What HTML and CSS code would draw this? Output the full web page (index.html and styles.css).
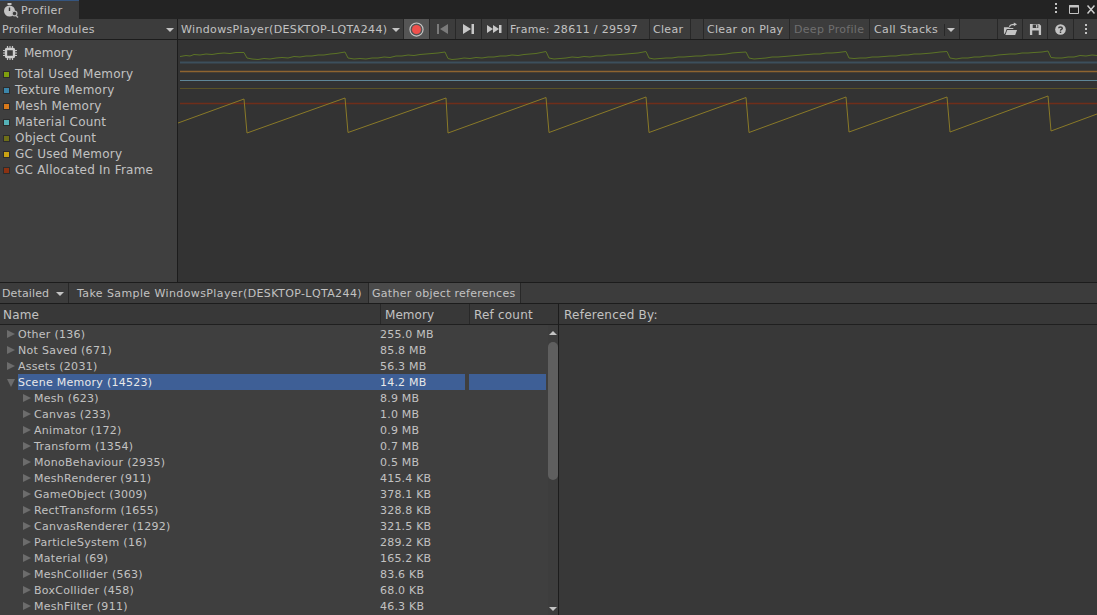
FILE: index.html
```html
<!DOCTYPE html>
<html lang="en">
<head>
<meta charset="utf-8">
<title>Profiler</title>
<link rel="stylesheet" href="styles.css">
</head>
<body>
<div class="window">
  <header class="titlebar">
    <div class="tab">
      <svg class="tab-icon" width="16" height="15" viewBox="0 0 16 15"><circle cx="6.500" cy="8" r="5.500" fill="#c4c4c4"/><rect x="4.500" y="0" width="4" height="2" fill="#c4c4c4"/><path d="M6.500 8V4.500" stroke="#333" stroke-width="1.400"/><circle cx="11.500" cy="10.500" r="2.400" fill="#3a3a3a" stroke="#b5b5b5" stroke-width="1.200"/><path d="M13 12.500l2 2" stroke="#b5b5b5" stroke-width="1.400"/></svg>
      <span>Profiler</span>
    </div>
    <div class="win-controls">
      <svg class="wc-dots" width="4" height="12" viewBox="0 0 4 12"><rect x="1" y="0" width="2" height="2" fill="#c4c4c4"/><rect x="1" y="4" width="2" height="2" fill="#c4c4c4"/><rect x="1" y="8" width="2" height="2" fill="#c4c4c4"/></svg>
      <svg class="wc-max" width="10" height="9" viewBox="0 0 10 9"><path d="M.5.500h9v8h-9z" fill="none" stroke="#c4c4c4"/><path d="M0 1.500h10" stroke="#c4c4c4" stroke-width="2"/></svg>
      <svg width="8" height="9" viewBox="0 0 8 9"><path d="M.5.500l7 8M7.500.500l-7 8" stroke="#d0d0d0" stroke-width="1.500"/></svg>
    </div>
  </header>

  <nav class="toolbar">
    <div class="tb modules"><span>Profiler Modules</span><i class="caret"></i></div>
    <div class="tb target"><span>WindowsPlayer(DESKTOP-LQTA244)</span><i class="caret"></i></div>
    <div class="tb icon-btn record"><svg width="15" height="15" viewBox="0 0 16 16"><circle cx="8" cy="8" r="7" fill="none" stroke="#c9c9c9" stroke-width="1.200"/><circle cx="8" cy="8" r="4.800" fill="#f0504c"/></svg></div>
    <div class="tb icon-btn"><svg width="11" height="12" viewBox="0 0 11 12"><path d="M0 1h2v10H0zM11 1v10L3 6z" fill="#7b7b7b"/></svg></div>
    <div class="tb icon-btn"><svg width="11" height="12" viewBox="0 0 11 12"><path d="M0 1v10l8-5zM8.500 1h2.500v10H8.500z" fill="#c8c8c8"/></svg></div>
    <div class="tb icon-btn"><svg width="15" height="10" viewBox="0 0 15 10"><path d="M0 1v8l6-4zM6 1v8l6-4zM12 1h2.500v8H12z" fill="#c8c8c8"/></svg></div>
    <div class="tb frame">Frame: 28611 / 29597</div>
    <div class="tb clear">Clear</div>
    <div class="tb spacer-s"></div>
    <div class="tb clear-play">Clear on Play</div>
    <div class="tb deep">Deep Profile</div>
    <div class="tb stacks"><span>Call Stacks</span><b class="sep"></b><i class="caret"></i></div>
    <div class="tb spacer-m"></div>
    <div class="tb icon-btn open"><svg width="15" height="14" viewBox="0 0 16 14"><path d="M1 5h5l1 1h4v1H4L2 12H1zM4.500 8H15l-2 5.500H2.500z" fill="#c4c4c4"/><path d="M7 5c0-2 2-3 5-3" fill="none" stroke="#c4c4c4" stroke-width="1.200"/><path d="M11.500 0l3.500 2-3.500 2z" fill="#c4c4c4"/></svg></div>
    <div class="tb icon-btn save"><svg width="13" height="13" viewBox="0 0 14 14"><path fill-rule="evenodd" d="M1 1h10l2 2v10H1zM4 1.500v4h6v-4zM3.500 8v5h7V8z" fill="#c4c4c4"/><path d="M7.500 2h1.500v3H7.500z" fill="#c4c4c4"/></svg></div>
    <div class="tb icon-btn help"><svg width="11" height="11" viewBox="0 0 12 12"><circle cx="6" cy="6" r="5.800" fill="#c4c4c4"/><path d="M4 4.700C4 2.800 8 2.800 8 4.700 8 6 6 5.800 6 7.300" fill="none" stroke="#3c3c3c" stroke-width="1.500"/><rect x="5.200" y="8.200" width="1.600" height="1.600" fill="#3c3c3c"/></svg></div>
    <div class="tb icon-btn menu"><svg width="4" height="12" viewBox="0 0 4 12"><rect x="1" y="1" width="2" height="2" fill="#c4c4c4"/><rect x="1" y="5" width="2" height="2" fill="#c4c4c4"/><rect x="1" y="9" width="2" height="2" fill="#c4c4c4"/></svg></div>
  </nav>

  <section class="chart-area">
    <aside class="legend">
      <div class="legend-title">
        <svg width="14" height="14" viewBox="0 0 14 14"><rect x="3" y="3" width="8" height="8" rx="1" fill="none" stroke="#cfcfcf" stroke-width="2.400"/><path d="M4.500 0v2M7 0v2M9.500 0v2M4.500 12v2M7 12v2M9.500 12v2M0 4.500h2M0 7h2M0 9.500h2M12 4.500h2M12 7h2M12 9.500h2" stroke="#c4c4c4" stroke-width="1.200"/></svg>
        <span>Memory</span>
      </div>
      <div class="legend-item"><i class="sw sw-total"></i>Total Used Memory</div>
      <div class="legend-item"><i class="sw sw-tex"></i>Texture Memory</div>
      <div class="legend-item"><i class="sw sw-mesh"></i>Mesh Memory</div>
      <div class="legend-item"><i class="sw sw-mat"></i>Material Count</div>
      <div class="legend-item"><i class="sw sw-obj"></i>Object Count</div>
      <div class="legend-item"><i class="sw sw-gc"></i>GC Used Memory</div>
      <div class="legend-item"><i class="sw sw-alloc"></i>GC Allocated In Frame</div>
    </aside>
    <div class="chart">
      <svg class="chart-svg" width="919" height="242" viewBox="178 40 919 242">
        <path d="M180 62.500H1097" stroke="#3c4f5c" stroke-width="2" fill="none"/>
        <path d="M180 71.500H1097" stroke="#8f6430" stroke-width="1.400" fill="none"/>
        <path d="M180 80.500H1097" stroke="#5f8797" fill="none"/>
        <path d="M180 88.500H1097" stroke="#5a5226" fill="none"/>
        <path d="M180 103.500H1097" stroke="#6f2e1a" stroke-width="1.600" fill="none"/>
        <polyline fill="none" stroke="#5c7426" points="180,56.500 186,55.500 190,56 194,54.500 200,55 206,54 212,54.500 218,53.500 224,53 230,53.500 236,52.500 244,52.500 247,58 252,59 258,59.500 264,58.500 270,59 276,58 282,57.500 288,58 294,56.500 300,57 306,56 312,56 318,55 324,55 330,54 336,53.500 345,52 348,58 354,59 360,58.500 366,59 372,58 378,58 384,57 390,57.500 396,56 402,56 408,55 414,55.500 420,54.500 426,54 432,53.500 438,53 445,52 448,58.500 452,59.500 458,59 464,58 470,58.500 476,57.500 482,58 488,57 494,57 500,56 506,56 512,55 518,55.500 524,54.500 530,54 536,53.500 546,51.500 549,58 554,59 560,58.500 566,58 572,57 578,57.500 584,56.500 590,57 596,56 602,56 608,55 614,55 620,54.500 626,54 632,53.500 638,53 646,51.500 649,58 654,59 660,58.500 666,58 672,58 678,57 684,57 690,56.500 696,56 702,56 708,55 714,55 720,54.500 726,54 732,53 738,52.500 746,52 749,58 754,59 760,58.500 766,58 772,57 778,57 784,56.500 790,56 796,55.500 802,55 808,54.500 814,54 820,54 826,53 832,53 838,52.500 846,51.500 849,58 854,58.500 860,58 866,58 872,57 878,57 884,56.500 890,56 896,56 902,55 908,55 914,54 920,54 926,53.500 932,53 940,52 947,51.500 950,58 956,59 962,58 968,58 974,57 980,57 986,56 992,56 998,55 1004,54.500 1010,54 1016,54 1022,53 1028,53 1034,52.500 1042,52 1048,51 1051,57.500 1056,58 1062,58 1068,57 1074,57 1080,55.500 1086,56 1092,55 1097,55.500"/>
        <polyline fill="none" stroke="#8a7a28" points="178,123 244,99 247,133 345,98 348,132.500 446,98 448,133 546,97.500 549,132.500 646,97 649,132.500 746,97.500 749,132.500 846,97 849,132 947,97 950,132 1048,96 1051,131 1097,114"/>
      </svg>
    </div>
  </section>

  <nav class="toolbar detail-bar">
    <div class="tb detailed"><span>Detailed</span><i class="caret"></i></div>
    <div class="tb sample">Take Sample WindowsPlayer(DESKTOP-LQTA244)</div>
    <div class="tb gather">Gather object references</div>
  </nav>

  <section class="details">
    <div class="tree-pane">
      <div class="tree-head">
        <div class="col-name">Name</div>
        <div class="col-mem">Memory</div>
        <div class="col-ref">Ref count</div>
      </div>
      <div class="tree-body">
        <div class="rows">
          <div class="row"><i class="arrow"></i><span class="name">Other (136)</span><span class="mem">255.0 MB</span></div>
          <div class="row"><i class="arrow"></i><span class="name">Not Saved (671)</span><span class="mem">85.8 MB</span></div>
          <div class="row"><i class="arrow"></i><span class="name">Assets (2031)</span><span class="mem">56.3 MB</span></div>
          <div class="row selected"><i class="arrow open-arrow"></i><span class="name">Scene Memory (14523)</span><span class="mem">14.2 MB</span><span class="ref"></span></div>
          <div class="row child"><i class="arrow"></i><span class="name">Mesh (623)</span><span class="mem">8.9 MB</span></div>
          <div class="row child"><i class="arrow"></i><span class="name">Canvas (233)</span><span class="mem">1.0 MB</span></div>
          <div class="row child"><i class="arrow"></i><span class="name">Animator (172)</span><span class="mem">0.9 MB</span></div>
          <div class="row child"><i class="arrow"></i><span class="name">Transform (1354)</span><span class="mem">0.7 MB</span></div>
          <div class="row child"><i class="arrow"></i><span class="name">MonoBehaviour (2935)</span><span class="mem">0.5 MB</span></div>
          <div class="row child"><i class="arrow"></i><span class="name">MeshRenderer (911)</span><span class="mem">415.4 KB</span></div>
          <div class="row child"><i class="arrow"></i><span class="name">GameObject (3009)</span><span class="mem">378.1 KB</span></div>
          <div class="row child"><i class="arrow"></i><span class="name">RectTransform (1655)</span><span class="mem">328.8 KB</span></div>
          <div class="row child"><i class="arrow"></i><span class="name">CanvasRenderer (1292)</span><span class="mem">321.5 KB</span></div>
          <div class="row child"><i class="arrow"></i><span class="name">ParticleSystem (16)</span><span class="mem">289.2 KB</span></div>
          <div class="row child"><i class="arrow"></i><span class="name">Material (69)</span><span class="mem">165.2 KB</span></div>
          <div class="row child"><i class="arrow"></i><span class="name">MeshCollider (563)</span><span class="mem">83.6 KB</span></div>
          <div class="row child"><i class="arrow"></i><span class="name">BoxCollider (458)</span><span class="mem">68.0 KB</span></div>
          <div class="row child"><i class="arrow"></i><span class="name">MeshFilter (911)</span><span class="mem">46.3 KB</span></div>
        </div>
        <div class="scrollbar">
          <i class="sb-up"></i>
          <div class="sb-track"><div class="sb-thumb"></div></div>
          <i class="sb-down"></i>
        </div>
      </div>
    </div>
    <div class="ref-pane">
      <div class="ref-head">Referenced By:</div>
    </div>
  </section>
</div>
</body>
</html>
```

FILE: styles.css
```css
* { box-sizing: border-box; }
html, body { margin: 0; padding: 0; }
body {
  width: 1097px;
  height: 615px;
  overflow: hidden;
  background: #383838;
  color: #c2c2c2;
  font-family: "DejaVu Sans", sans-serif;
  font-size: 11px;
  line-height: 16px;
}
.window { display: flex; flex-direction: column; height: 615px; }

.titlebar {
  height: 19px;
  flex: none;
  display: flex;
  justify-content: space-between;
  background: #232323;
}
.tab {
  width: 79px;
  display: flex;
  align-items: center;
  gap: 2px;
  padding-left: 3px;
  background: #3c3c3c;
  border-top: 1px solid #35557f;
  letter-spacing: .36px;
}
.tab span { padding-top: 2px; }
.win-controls { display: flex; align-items: center; gap: 8px; padding: 0 2px 1px 0; }
.wc-dots { margin-right: 3px; }

.toolbar {
  height: 21px;
  flex: none;
  display: flex;
  background: #3c3c3c;
  border-bottom: 1px solid #1c1c1c;
}
.tb {
  height: 20px;
  flex: none;
  display: flex;
  align-items: center;
  justify-content: space-between;
  border-right: 1px solid #282828;
  padding: 1px 0 0 2px;
  white-space: nowrap;
  letter-spacing: .3px;
}
.caret {
  width: 0;
  height: 0;
  border-left: 4px solid transparent;
  border-right: 4px solid transparent;
  border-top: 4px solid #c4c4c4;
}
.modules { width: 178px; padding-right: 3px; border-right-color: #1c1c1c; }
.target { width: 226px; padding: 1px 3px 0 3px; letter-spacing: .36px; }
.icon-btn { justify-content: center; padding: 0; width: 26px; }
.record { width: 26px; background: #555; }
.frame { width: 142px; }
.clear { width: 41px; padding-left: 3px; }
.spacer-s { width: 13px; }
.clear-play { width: 86px; padding-left: 3px; }
.deep { width: 80px; padding-left: 4px; color: #6f6f6f; }
.stacks { width: 90px; padding: 1px 4px 0 4px; letter-spacing: .36px; }
.stacks .sep { width: 1px; height: 12px; background: #282828; margin-left: 4px; }
.spacer-m { width: 38px; }
.open { width: 25px; }
.save { width: 25px; }
.help { width: 26px; }
.menu { width: 23px; border-right: 0; }

.chart-area { height: 242px; flex: none; display: flex; }
.legend {
  width: 178px;
  flex: none;
  background: #3f3f3f;
  border-right: 1px solid #1c1c1c;
  padding-top: 5px;
}
.legend-title {
  height: 16px;
  display: flex;
  align-items: center;
  gap: 7px;
  padding-left: 3px;
  margin-bottom: 5px;
  font-size: 12px;
}
.legend-item {
  height: 16px;
  display: flex;
  align-items: center;
  gap: 5px;
  padding-left: 3px;
  font-size: 12px;
  letter-spacing: .22px;
}
.sw { width: 7px; height: 7px; flex: none; border: 1px solid #2c2c2c; }
.sw-total { background: #7f9f0f; }
.sw-tex { background: #3c86aa; }
.sw-mesh { background: #d8791a; }
.sw-mat { background: #55b2b8; }
.sw-obj { background: #6f6f18; }
.sw-gc { background: #c9a214; }
.sw-alloc { background: #8c3212; }
.chart { flex: 1; background: #333; overflow: hidden; }
.chart-svg { display: block; }

.detail-bar { height: 22px; border-top: 1px solid #1c1c1c; }
.detailed { width: 69px; padding-right: 4px; letter-spacing: .13px; }
.sample { width: 300px; padding-left: 8px; letter-spacing: .4px; }
.gather { width: 152px; background: #4a4a4a; padding-left: 3px; letter-spacing: .27px; }

.details { flex: 1; min-height: 0; display: flex; background: #3f3f3f; }
.tree-pane { width: 559px; flex: none; border-right: 1px solid #1c1c1c; display: flex; flex-direction: column; }
.tree-head {
  height: 21px;
  flex: none;
  display: flex;
  background: #383838;
  border-bottom: 1px solid #1f1f1f;
  line-height: 20px;
  font-size: 12px;
  letter-spacing: .2px;
}
.col-name { width: 381px; padding: 1px 0 0 3px; border-right: 1px solid #282828; }
.col-mem { width: 89px; padding: 1px 0 0 4px; border-right: 1px solid #282828; letter-spacing: .05px; }
.col-ref { flex: 1; padding: 1px 0 0 4px; }
.tree-body { flex: 1; min-height: 0; display: flex; overflow: hidden; }
.rows { width: 548px; flex: none; padding-top: 1px; }
.row { height: 16px; display: flex; letter-spacing: .28px; }
.row span { padding-top: 1px; }
.arrow {
  flex: none;
  width: 0;
  height: 0;
  margin: 4px 3px 0 7px;
  border-top: 4px solid transparent;
  border-bottom: 4px solid transparent;
  border-left: 8px solid #6c6c6c;
}
.open-arrow {
  margin: 5px 3px 0 7px;
  border-left: 4px solid transparent;
  border-right: 4px solid transparent;
  border-top: 8px solid #6c6c6c;
  border-bottom: 0;
}
.name { width: 362px; flex: none; }
.child .arrow { margin-left: 23px; }
.child .name { width: 346px; }
.mem { width: 89px; flex: none; letter-spacing: .2px; }
.selected .name { width: 447px; margin-right: -85px; background: #3e5f96; color: #e8e8e8; }
.selected .mem { width: 85px; margin-right: 4px; color: #e8e8e8; position: relative; }
.selected .ref { width: 77px; flex: none; background: #3e5f96; }

.scrollbar { width: 10px; flex: none; background: #3d3d3d; display: flex; flex-direction: column; align-items: center; }
.sb-up, .sb-down { flex: none; width: 0; height: 0; border-left: 4px solid transparent; border-right: 4px solid transparent; }
.sb-up { border-bottom: 4px solid #c4c4c4; margin: 6px 0 7px; }
.sb-down { border-top: 4px solid #c4c4c4; margin: 5px 0 4px; }
.sb-track { flex: 1; width: 100%; }
.sb-thumb { width: 10px; height: 138px; border-radius: 5px; background: #5f5f5f; }

.ref-pane { flex: 1; background: #383838; }
.ref-head { height: 21px; padding: 1px 0 0 5px; line-height: 20px; font-size: 12px; letter-spacing: .25px; border-bottom: 1px solid #1f1f1f; background: #383838; }
```
